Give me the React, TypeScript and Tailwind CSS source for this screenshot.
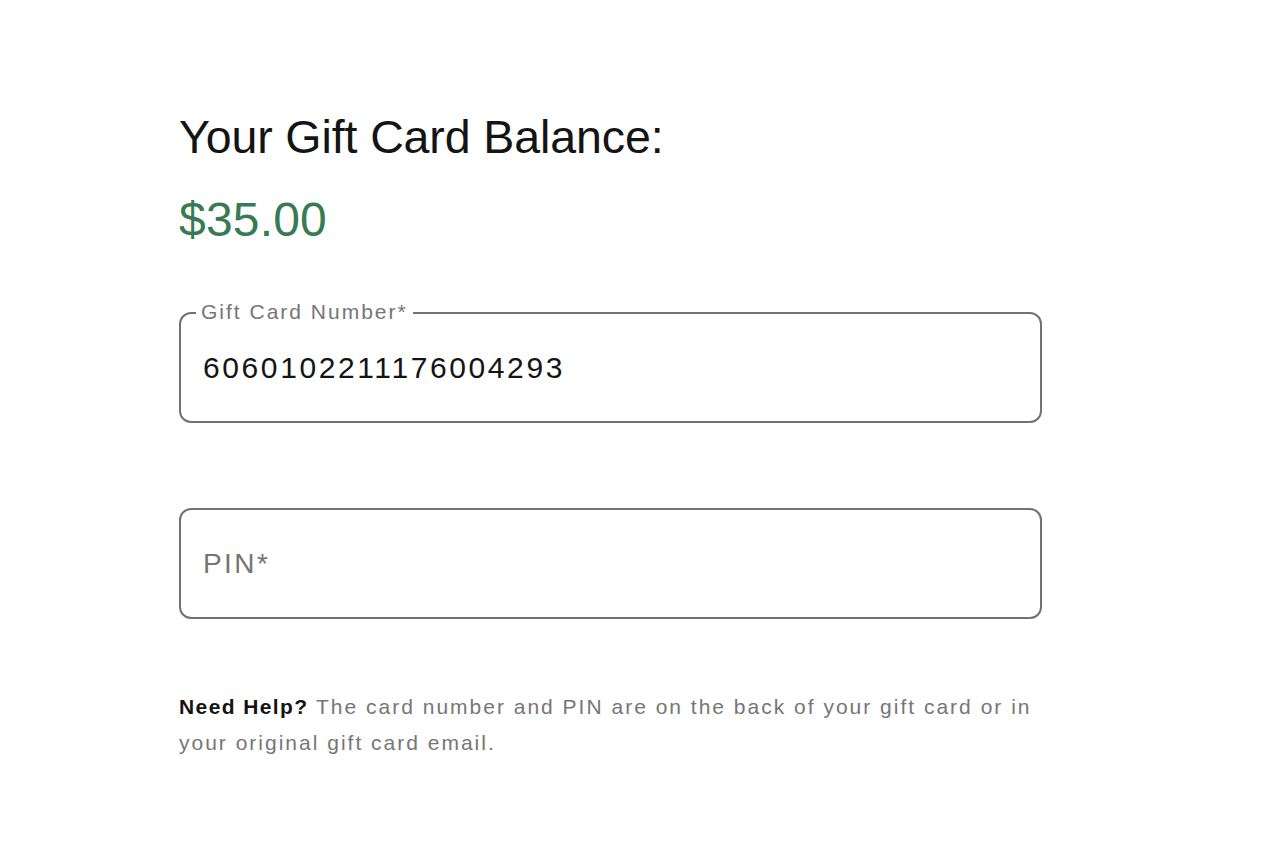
import React from 'react';

const font = { fontFamily: '"Liberation Sans", Arial, Helvetica, sans-serif' };

const App = () => {
  return (
    <div className="min-h-screen w-full bg-white" style={font}>
      <div className="w-[1042px] pl-[179px] pt-[110px]">
        {/* Balance */}
        <h1 className="text-[46.5px] leading-[55px] font-normal tracking-[-0.1px] text-[#141414]">Your Gift Card Balance:</h1>
        <p className="mt-[27px] text-[48px] leading-[56px] tracking-[0.2px] text-[#367b52]">$35.00</p>

        {/* Card number */}
        <div className="relative mt-[64px] flex h-[111px] items-center rounded-[12px] border-2 border-[#727272] pl-[22px]">
          <span className="absolute -top-[14px] left-[15px] bg-white px-[5px] text-[21px] leading-[24px] tracking-[2px] text-[#757575]">
            Gift Card Number*
          </span>
          <span className="pt-[1px] text-[30px] leading-[36px] tracking-[2.6px] text-[#141414]">6060102211176004293</span>
        </div>

        {/* PIN */}
        <div className="mt-[85px] flex h-[111px] items-center rounded-[12px] border-2 border-[#727272] pl-[22px]">
          <span className="pt-[1px] text-[28px] leading-[36px] tracking-[2.4px] text-[#757575]">PIN*</span>
        </div>

        {/* Help */}
        <p className="mt-[70px] text-[21px] leading-[36px] tracking-[2px] text-[#767676]">
          <span className="font-bold tracking-[1.4px] text-[#141414]">Need Help?</span>{' '}
          <span>The card number and PIN are on the back of your gift card or in your original gift card email.</span>
        </p>
      </div>
    </div>
  );
};

export default App;
